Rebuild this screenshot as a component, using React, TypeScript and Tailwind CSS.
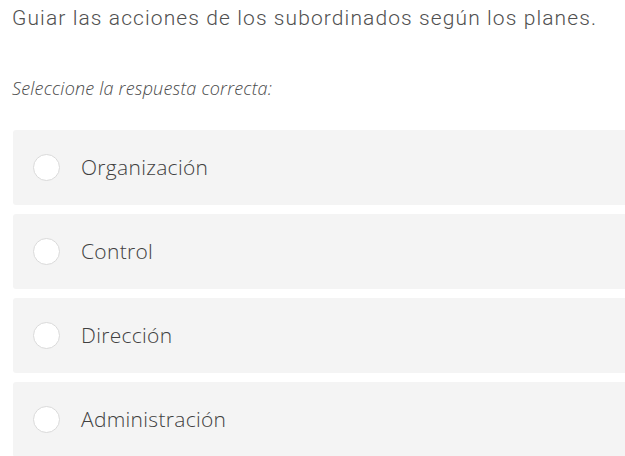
const options = ["Organización", "Control", "Dirección", "Administración"];

export default function App() {
  return (
    <div className="w-[625px] h-[456px] overflow-hidden bg-white">
      <div className="pl-3 pt-[4px]">
        <p className="text-[21px] leading-[28px] font-light tracking-[1.1px] text-[#505050] font-['Roboto',sans-serif] whitespace-nowrap">
          Guiar las acciones de los subordinados según los planes.
        </p>
        <p className="mt-[44px] text-[18px] leading-[24px] font-light italic tracking-[0.2px] text-[#4a4a4a] font-['Open_Sans',sans-serif]">
          Seleccione la respuesta correcta:
        </p>
      </div>
      <div className="mt-[30px] ml-[13px] w-[620px] flex flex-col gap-[9px]">
        {options.map((opt) => (
          <label
            key={opt}
            className="h-[75px] flex items-center bg-[#f4f4f4] rounded-[3px] pl-[20px] cursor-pointer"
          >
            <span className="w-[27px] h-[27px] rounded-full bg-white border-[1.5px] border-[#dadada] shrink-0" />
            <span className="ml-[21px] text-[21px] font-light tracking-[0.3px] text-[#404040] font-['Open_Sans',sans-serif]">
              {opt}
            </span>
          </label>
        ))}
      </div>
    </div>
  );
}
